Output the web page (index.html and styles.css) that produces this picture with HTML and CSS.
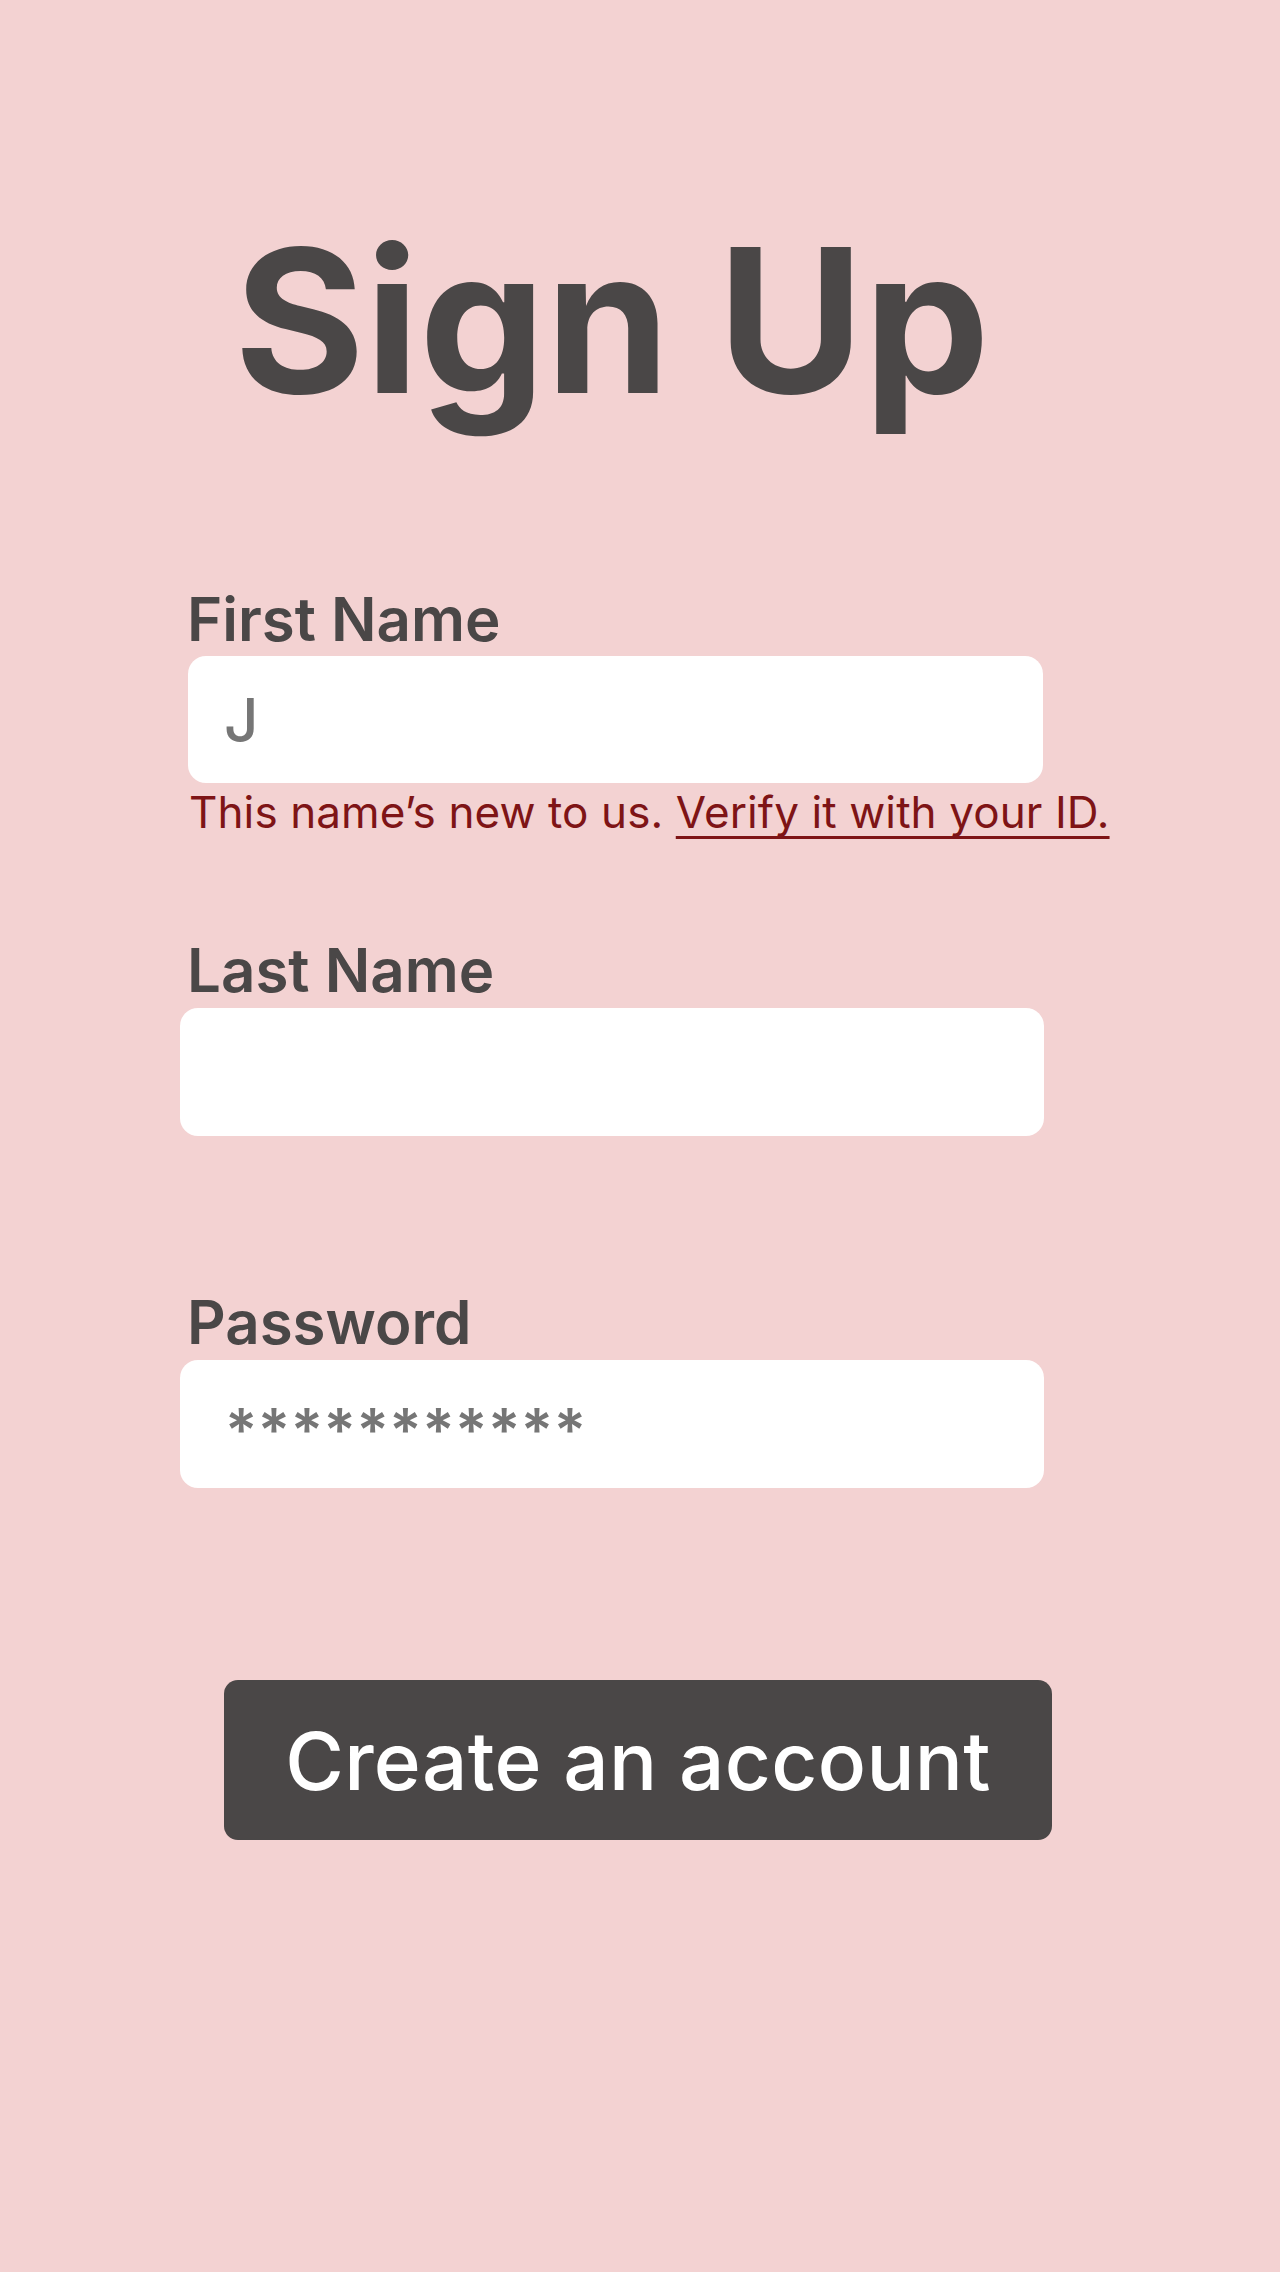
FILE: index.html
```html
<!DOCTYPE html>
<html lang="en">
<head>
<meta charset="utf-8">
<title>Sign Up</title>
<link rel="stylesheet" href="styles.css">
</head>
<body>
<main class="page">
  <h1 class="title">Sign Up</h1>
  <form class="form">
    <div class="field">
      <label class="label" for="first">First Name</label>
      <input class="input input-first" id="first" type="text" value="J">
      <p class="error">This name’s new to us. <a class="link" href="#">Verify it with your ID.</a></p>
    </div>
    <div class="field field-last">
      <label class="label" for="last">Last Name</label>
      <input class="input" id="last" type="text" value="">
    </div>
    <div class="field field-pass">
      <label class="label" for="pass">Password</label>
      <input class="input input-pass" id="pass" type="text" value="***********">
    </div>
  </form>
  <button class="btn" type="button">Create an account</button>
</main>
</body>
</html>
```

FILE: styles.css
```css
html, body {
  margin: 0;
  padding: 0;
}
body {
  background: #f3d2d2;
  font-family: "Inter", "Noto Sans", sans-serif;
  color: #4a4747;
  min-height: 2272px;
}
.page {
  display: flex;
  flex-direction: column;
  padding-top: 220px;
}
.title {
  margin: 0 0 0 180px;
  width: 864px;
  text-align: center;
  font-size: 200px;
  line-height: 1;
  font-weight: 700;
  color: #4a4747;
}
.form {
  display: flex;
  flex-direction: column;
  margin: 169px 0 0 180px;
  width: 864px;
}
.field {
  display: flex;
  flex-direction: column;
}
.field-last {
  margin-top: 106px;
}
.field-pass {
  margin-top: 156px;
}
.label {
  font-size: 60px;
  line-height: 1;
  font-weight: 600;
  padding-left: 7px;
  color: #4a4747;
}
.input {
  box-sizing: border-box;
  margin-top: 8px;
  width: 864px;
  height: 128px;
  border: 0;
  outline: none;
  border-radius: 18px;
  background: #ffffff;
  padding: 0 45px;
  font-family: "Inter", "Noto Sans", sans-serif;
  font-size: 60px;
  font-weight: 500;
  color: #767676;
}
.input-first {
  margin-top: 7px;
  margin-left: 8px;
  width: 855px;
  height: 127px;
  padding-left: 36px;
}
.input-pass {
  padding-top: 12px;
  letter-spacing: 0.5px;
  font-weight: 600;
}
.error {
  margin: 7px 0 0 9px;
  font-size: 44px;
  line-height: 1;
  font-weight: 400;
  color: #7e1416;
  white-space: nowrap;
  letter-spacing: 0.1px;
}
.link {
  color: #7e1416;
  text-decoration: underline;
  text-decoration-thickness: 3px;
  text-underline-offset: 8px;
  text-decoration-skip-ink: none;
}
.btn {
  margin: 192px 0 0 224px;
  width: 828px;
  height: 160px;
  border: 0;
  border-radius: 14px;
  background: #4a4747;
  color: #ffffff;
  font-family: "Inter", "Noto Sans", sans-serif;
  font-size: 80px;
  font-weight: 500;
  letter-spacing: 0.3px;
  padding: 0;
  cursor: pointer;
}
```
